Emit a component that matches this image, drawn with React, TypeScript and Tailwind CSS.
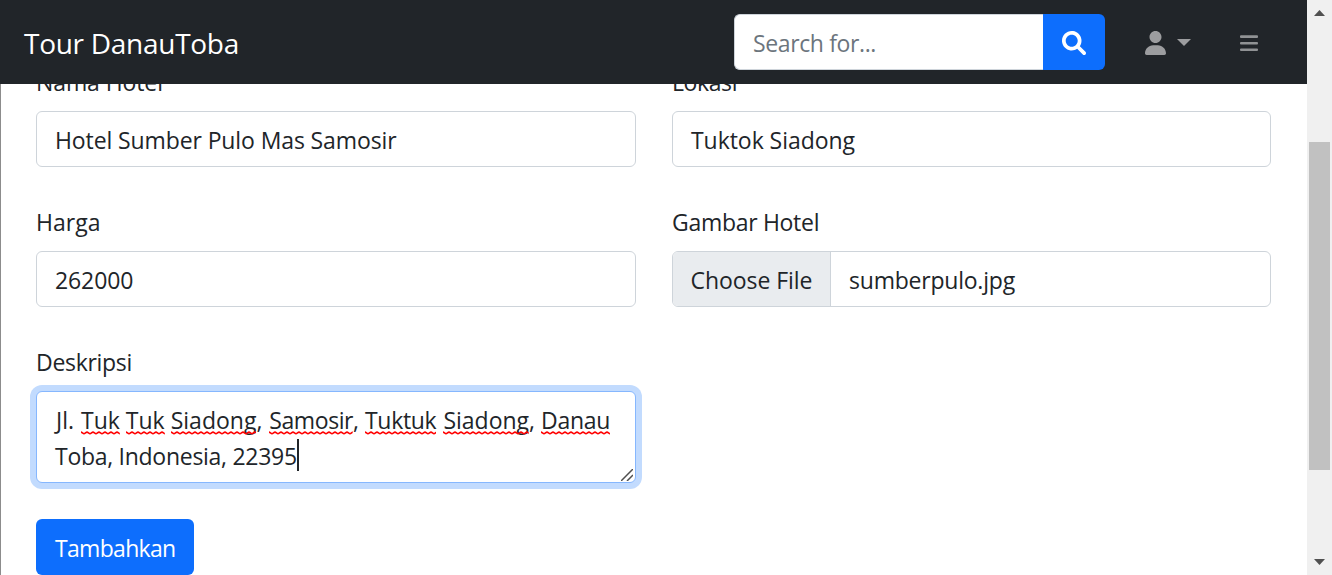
import type { ReactNode } from "react";

const control =
  "flex h-14 items-center rounded-[6px] border border-[#ced4da] bg-white px-[18px]";

function T({ children, className = "" }: { children: ReactNode; className?: string }) {
  return <span className={`whitespace-nowrap pt-[2px] ${className}`}>{children}</span>;
}

function Misspelled({ id, children, className = "" }: { id: string; children: string; className?: string }) {
  return (
    <span className={`relative inline-block ${className}`}>
      {children}
      <svg className="absolute bottom-[3px] left-0 h-[4px] w-full" aria-hidden="true">
        <defs>
          <pattern id={id} width="6" height="4" patternUnits="userSpaceOnUse">
            <path d="M-3 2.700 C-2 2.700 -1 1.100 0 1.100 S2 2.700 3 2.700 S5 1.100 6 1.100 S8 2.700 9 2.700" fill="none" stroke="#f00" strokeWidth="1.600" />
          </pattern>
        </defs>
        <rect width="100%" height="4" fill={`url(#${id})`} />
      </svg>
    </span>
  );
}

function Field({ label, children }: { label: ReactNode; children: ReactNode }) {
  return (
    <div className="flex flex-col gap-3">
      <div className="flex h-9 items-center">{label}</div>
      {children}
    </div>
  );
}

function Navbar() {
  return (
    <nav className="relative z-10 flex h-[84px] shrink-0 items-center bg-[#212529] pl-6 text-white">
      <T className="text-[28px] leading-[42px] tracking-[-0.28px]">Tour DanauToba</T>
      <div className="ml-auto flex h-14 w-[371px]">
        <div className="flex flex-1 items-center rounded-l-[6px] border border-r-0 border-[#ced4da] bg-white pl-[18px] text-[#6c757d]">
          <T className="tracking-[-0.38px]">Search for...</T>
        </div>
        <button className="flex w-[62px] items-center justify-center rounded-r-[6px] bg-[#0d6efd]" aria-label="Search">
          <svg className="mt-[2px] size-6" viewBox="0 0 512 512" fill="white">
            <path d="M500.300 443.700l-119.700-119.700c27.220-40.410 40.650-90.900 33.460-144.700C401.800 87.790 326.800 13.320 235.200 1.723C99.010-15.510-15.510 99.010 1.724 235.200c11.600 91.640 86.080 166.700 177.600 178.900c53.800 7.189 104.300-6.236 144.700-33.460l119.700 119.700c15.620 15.620 40.950 15.620 56.570 0C515.900 484.700 515.900 459.300 500.300 443.700zM79.100 208c0-70.580 57.420-128 128-128s128 57.420 128 128c0 70.580-57.420 128-128 128S79.100 278.600 79.100 208z" />
          </svg>
        </button>
      </div>
      <div className="ml-10 flex items-center gap-[11px]">
        <svg className="mt-[2px] h-6 w-[21px]" viewBox="0 0 448 512" fill="#9c9d9f">
          <path d="M224 256c70.700 0 128-57.310 128-128s-57.300-128-128-128C153.300 0 96 57.310 96 128S153.300 256 224 256zM274.700 304H173.300C77.610 304 0 381.600 0 477.300c0 19.140 15.520 34.670 34.660 34.670h378.700C432.500 512 448 496.500 448 477.300C448 381.600 370.400 304 274.700 304z" />
        </svg>
        <svg className="h-[7px] w-[14px]" viewBox="0 0 14 7" fill="#9c9d9f">
          <path d="M0 0h14L7 7z" />
        </svg>
      </div>
      <svg className="mt-[2px] mr-[49px] ml-[49px] h-[17px] w-[18px]" viewBox="0 0 18 17" fill="#909294">
        <rect y="0.300" width="18" height="2.600" rx="1" />
        <rect y="6.900" width="18" height="2.600" rx="1" />
        <rect y="13.500" width="18" height="2.600" rx="1" />
      </svg>
    </nav>
  );
}

function Scrollbar() {
  return (
    <div className="flex w-[25px] flex-col items-center bg-[#f0f0f0]">
      <svg className="mt-[10px] h-[6px] w-[11px]" viewBox="0 0 11 6" fill="#505050">
        <path d="M0 6h11L5.500 0z" />
      </svg>
      <div className="mt-[126px] h-[328px] w-[21px] bg-[#c1c1c1]" />
      <svg className="mt-auto mb-[10px] h-[6px] w-[11px]" viewBox="0 0 11 6" fill="#505050">
        <path d="M0 0h11L5.500 6z" />
      </svg>
    </div>
  );
}

export default function App() {
  return (
    <div className="flex h-[575px] w-[1332px] overflow-hidden bg-white font-['Open_Sans','Noto_Sans',sans-serif] text-[23px] leading-9 text-[#212529]">
      <div className="flex min-w-0 flex-1 flex-col">
        <Navbar />
        <main className="-mt-[21px] flex-1 border-l border-[#8c8c8c] pr-9 pl-[35px]">
          <div className="grid grid-cols-[600px_599px] gap-x-9 gap-y-9">
            <Field label={<T className="tracking-[-0.1px]">Nama Hotel</T>}>
              <div className={control}><T className="tracking-[-0.11px]">Hotel Sumber Pulo Mas Samosir</T></div>
            </Field>
            <Field label={<T className="tracking-[-0.4px]">Lokasi</T>}>
              <div className={control}><T className="tracking-[-0.05px]">Tuktok Siadong</T></div>
            </Field>
            <Field label={<T>Harga</T>}>
              <div className={control}><T className="tracking-[-0.1px]">262000</T></div>
            </Field>
            <Field label={<T className="tracking-[-0.3px]">Gambar Hotel</T>}>
              <div className="flex h-14 overflow-hidden rounded-[6px] border border-[#ced4da]">
                <div className="flex w-[158px] items-center border-r border-[#ced4da] bg-[#e9ecef] pl-[17.5px]">
                  <T className="tracking-[-0.05px]">Choose File</T>
                </div>
                <div className="flex items-center pl-[18px]"><T className="tracking-[-0.22px]">sumberpulo.jpg</T></div>
              </div>
            </Field>
            <Field label={<T className="tracking-[-0.3px]">Deskripsi</T>}>
              <div className="relative h-[92px] rounded-[6px] border border-[#86b7fe] bg-white px-[18px] pt-[10px] shadow-[0_0_0_6px_#c2dbfe]">
                <div className="h-9 pl-px whitespace-nowrap">
                  Jl. <Misspelled id="w1" className="ml-px">Tuk</Misspelled> <Misspelled id="w2">Tuk</Misspelled>{" "}
                  <Misspelled id="w3">Siadong</Misspelled>, <Misspelled id="w4" className="ml-px tracking-[-0.43px]">Samosir</Misspelled>,{" "}
                  <Misspelled id="w5" className="tracking-[-0.3px]">Tuktuk</Misspelled>{" "}
                  <Misspelled id="w6" className="ml-px">Siadong</Misspelled>,{" "}
                  <Misspelled id="w7" className="tracking-[-0.3px]">Danau</Misspelled>
                </div>
                <div className="flex h-9">
                  <span className="whitespace-nowrap tracking-[-0.28px]">Toba, Indonesia, 22395</span>
                  <span className="mt-px h-8 w-[2px] bg-[#212529]" />
                </div>
                <svg className="absolute right-[2px] bottom-[1px] size-3" viewBox="0 0 12 12" stroke="#505050" strokeWidth="1.500">
                  <path d="M0 12L12 0M6 12L12 6" />
                </svg>
              </div>
            </Field>
          </div>
          <button className="mt-9 flex h-14 w-[158px] items-center rounded-[6px] bg-[#0d6efd] pl-[19px] text-white">
            <T className="tracking-[-0.68px]">Tambahkan</T>
          </button>
        </main>
      </div>
      <Scrollbar />
    </div>
  );
}
